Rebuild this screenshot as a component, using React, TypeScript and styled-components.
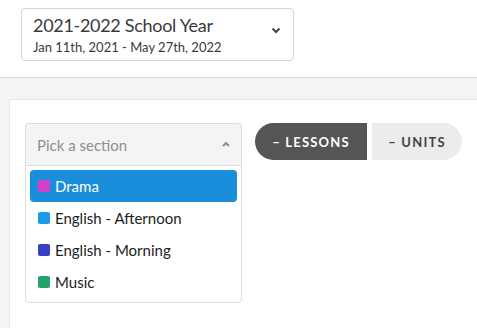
import React from 'react';
import styled, { createGlobalStyle } from 'styled-components';

interface Section {
  name: string,
  color: string,
}

const sections: Section[] = [
  { name: 'Drama', color: '#d23fc8' },
  { name: 'English - Afternoon', color: '#1a9be8' },
  { name: 'English - Morning', color: '#3541c2' },
  { name: 'Music', color: '#22a36c' },
];

const GlobalStyle = createGlobalStyle`
  html, body {
    margin: 0;
    padding: 0;
    background: #f4f4f4;
    font-family: Lato, "Open Sans", sans-serif;
    color: #333;
  }
`;

const Page = styled.div`
  display: flex;
  flex-direction: column;
  height: 328px;
  overflow: hidden;
`;

const Header = styled.div`
  height: 78px;
  background: #fff;
  border-bottom: 1px solid #dcdcdc;
  padding: 8px 0 0 21px;
  box-sizing: border-box;
`;

const YearPicker = styled.div`
  width: 273px;
  height: 53px;
  box-sizing: border-box;
  border: 1px solid #d6d6d6;
  border-radius: 4px;
  padding: 4px 12px 0 11px;
  display: flex;
  align-items: flex-start;
  justify-content: space-between;
`;

const YearTitle = styled.div`
  font-size: 18px;
  letter-spacing: -0.3px;
  line-height: 24px;
  color: #3a3a3a;
`;

const YearRange = styled.div`
  font-size: 13px;
  line-height: 16px;
  color: #3a3a3a;
  margin-top: 2px;
`;

const Chevron = styled.svg`
  margin-top: 14px;
  flex-shrink: 0;
`;

const Body = styled.div`
  flex: 1;
  padding: 21px 0 0 9px;
`;

const Panel = styled.div`
  height: 100%;
  background: #fff;
  border-top: 1px solid #e8e8e8;
  border-left: 1px solid #e8e8e8;
  border-top-left-radius: 3px;
  padding: 23px 0 0 15px;
  box-sizing: border-box;
  display: flex;
  align-items: flex-start;
`;

const SelectBox = styled.div`
  width: 217px;
`;

const SelectHead = styled.div`
  height: 42px;
  box-sizing: border-box;
  background: #f4f4f4;
  border: 1px solid #dedede;
  border-bottom: none;
  border-radius: 4px 4px 0 0;
  display: flex;
  align-items: center;
  justify-content: space-between;
  padding: 0 10px 0 11px;
  font-size: 15px;
  color: #8f8f8f;
`;

const OptionList = styled.div`
  background: #fff;
  border: 1px solid #dedede;
  border-radius: 0 0 4px 4px;
  padding: 4px;
`;

const Option = styled.div<{ active?: boolean }>`
  height: 32px;
  border-radius: 4px;
  display: flex;
  align-items: center;
  gap: 5px;
  padding-left: 8px;
  font-size: 15px;
  color: ${({ active }) => active ? '#fff' : '#222'};
  background: ${({ active }) => active ? '#1a8edb' : 'transparent'};
`;

const Swatch = styled.span<{ color: string }>`
  width: 12px;
  height: 12px;
  border-radius: 2px;
  background: ${({ color }) => color};
`;

const Toggle = styled.div`
  display: flex;
  gap: 5px;
  margin-left: 13px;
`;

const ToggleButton = styled.div<{ side: 'left' | 'right', active?: boolean }>`
  height: 37px;
  display: flex;
  align-items: center;
  justify-content: center;
  font-size: 13px;
  font-weight: 700;
  letter-spacing: 1.2px;
  text-transform: uppercase;
  color: ${({ active }) => active ? '#fff' : '#444'};
  background: ${({ active }) => active ? '#555' : '#ececec'};
  border-radius: ${({ side }) => side === 'left' ? '19px 0 0 19px' : '0 19px 19px 0'};
  width: ${({ side }) => side === 'left' ? '112px' : '90px'};
`;

const App: React.FC = () => {
  return (
    <Page>
      <GlobalStyle />
      <Header>
        <YearPicker>
          <div>
            <YearTitle>2021-2022 School Year</YearTitle>
            <YearRange>Jan 11th, 2021 - May 27th, 2022</YearRange>
          </div>
          <Chevron width="10" height="7" viewBox="0 0 10 7">
            <path d="M1.5 1.5 L5 5 L8.5 1.5" fill="none" stroke="#444" strokeWidth="2" />
          </Chevron>
        </YearPicker>
      </Header>
      <Body>
        <Panel>
          <SelectBox>
            <SelectHead>
              <span>Pick a section</span>
              <svg width="10" height="7" viewBox="0 0 10 7">
                <path d="M2 5 L5 2 L8 5" fill="none" stroke="#888" strokeWidth="1.8" />
              </svg>
            </SelectHead>
            <OptionList>
              {sections.map((s, i) => (
                <Option key={s.name} active={i === 0}>
                  <Swatch color={s.color} />
                  {s.name}
                </Option>
              ))}
            </OptionList>
          </SelectBox>
          <Toggle>
            <ToggleButton side="left" active>– Lessons</ToggleButton>
            <ToggleButton side="right">– Units</ToggleButton>
          </Toggle>
        </Panel>
      </Body>
    </Page>
  );
};

export default App;
